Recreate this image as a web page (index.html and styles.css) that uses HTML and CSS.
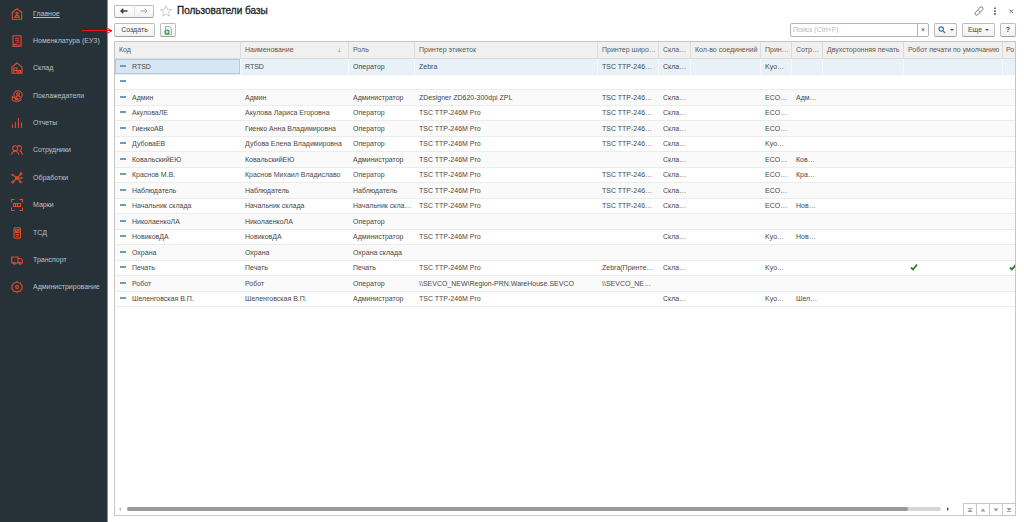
FILE: index.html
```html
<!DOCTYPE html>
<html lang="ru">
<head>
<meta charset="utf-8">
<title>Пользователи базы</title>
<link rel="stylesheet" href="styles.css">
</head>
<body>
<nav class="sidebar">
<a class="nav-item active" href="#"><svg class="nav-icon" viewBox="0 0 12 12"><path d="M.7 4.800 6 .8l5.300 4M1.300 4.500v6.700h9.400V4.500M3 9.300h6M4.200 9c0-2.200 3.600-2.200 3.600 0"/><circle cx="6" cy="5.300" r="1.100"/></svg><span>Главное</span></a>
<a class="nav-item" href="#"><svg class="nav-icon" viewBox="0 0 12 12"><path d="M2 .8h8v10.400H2zM4 3.200h4.200M4 5.200h4.200M5.500 7.200h2.700M1.500 9.300H6M4 9.300v2M6 9.300v2M8 9.300v2"/></svg><span>Номенклатура (ЕУЗ)</span></a>
<a class="nav-item" href="#"><svg class="nav-icon" viewBox="0 0 12 12"><path d="M1 11.200V5l5-4 5 4v6.200zM2.800 11V6H6v2.500h3.500V11M3 8.500h3V11M7.800 8.500V11"/></svg><span>Склад</span></a>
<a class="nav-item" href="#"><svg class="nav-icon" viewBox="0 0 12 12"><circle cx="7" cy="5" r="4.200"/><circle cx="7" cy="3.800" r="1.300"/><path d="M4.800 7.800c0-2.800 4.400-2.800 4.400 0M1.200 6v3.800l2 1.400h4.500l2.800-1.700M1.200 6.800l3 1.500h2.300v1.300H4"/></svg><span>Поклажедатели</span></a>
<a class="nav-item" href="#"><svg class="nav-icon" viewBox="0 0 12 12"><path d="M1.500 11V7.500M4.500 11V5M7.500 11V1M10.500 11V5.500"/></svg><span>Отчеты</span></a>
<a class="nav-item" href="#"><svg class="nav-icon" viewBox="0 0 12 12"><circle cx="4.200" cy="4.300" r="2.500"/><path d="M.7 10.800C.7 6 7.700 6 7.700 10.800M6.600 2.300c2-1.500 4.200 0 3.900 2.100-.2 1.300-1 2.100-2 2.300 1.900.5 2.800 2 2.800 4.100"/></svg><span>Сотрудники</span></a>
<a class="nav-item" href="#"><svg class="nav-icon" viewBox="0 0 12 12"><path d="M6 6 2 3M6 6l4-4M6 6l-4 4M6 6l3.500 3.500M6 6h4.500"/><circle cx="5.800" cy="6" r="1.300"/><circle cx="1.500" cy="2.800" r=".6"/><circle cx="10" cy="1.800" r=".9"/><circle cx="1.800" cy="10" r="1"/><circle cx="9.500" cy="10" r=".7"/><circle cx="10.700" cy="6" r=".5"/></svg><span>Обработки</span></a>
<a class="nav-item" href="#"><svg class="nav-icon" viewBox="0 0 12 12"><path d="M.5 3.500v-3h3M8.500.5h3v3M11.500 8.500v3h-3M3.500 11.500h-3v-3M2.500 4v4M4.500 4v4M6.500 4v4M9.500 4v4M2 4.500h8M2 7.500h8"/></svg><span>Марки</span></a>
<a class="nav-item" href="#"><svg class="nav-icon" viewBox="0 0 12 12"><rect x="3" y=".8" width="6.500" height="10.500" rx="1"/><path d="M4.500 2.800H8V5.500H4.500zM4.500 7.500H8M4.500 9.300H8M7.500 3 5 5.200"/></svg><span>ТСД</span></a>
<a class="nav-item" href="#"><svg class="nav-icon" viewBox="0 0 12 12"><path d="M2.200 9H.7V3H7v6H4.500M7 4.500h2.800l1.600 2V9h-1M7 9h1"/><circle cx="3.300" cy="9.200" r="1"/><circle cx="9.200" cy="9.200" r="1"/></svg><span>Транспорт</span></a>
<a class="nav-item" href="#"><svg class="nav-icon" viewBox="0 0 12 12"><path d="m6 .7 1.500 1 1.900.2.700 1.700 1.200 1.200-.4 1.200.4 1.300-1.200 1.200-.7 1.700-1.900.2-1.500.9-1.500-.9-1.900-.2-.7-1.700L.7 7.300 1.100 6 .7 4.800l1.200-1.200.7-1.700 1.900-.2z"/><circle cx="6" cy="6" r="1.400"/></svg><span>Администрирование</span></a>
</nav>
<main class="page">
<header class="titlebar">
<div class="history">
<button class="btn" aria-label="Назад"><svg class="arrow" viewBox="0 0 8 6"><path d="M7.500 3H1M3.300.8 1 3l2.300 2.200"/></svg></button>
<button class="btn" aria-label="Вперед" disabled><svg class="arrow" viewBox="0 0 8 6"><path d="M.5 3H7M4.700.8 7 3 4.700 5.200"/></svg></button>
</div>
<button class="plain" aria-label="В избранное"><svg class="star" viewBox="0 0 12 12"><path d="m6 .7 1.500 3.800 4 .2-3.100 2.500 1.100 4L6 9l-3.500 2.200 1.100-4L.5 4.700l4-.2z"/></svg></button>
<h1>Пользователи базы</h1>
<div class="window-tools">
<button class="plain" aria-label="Ссылка"><svg class="tool" viewBox="0 0 10 10"><path d="M4 3.500 6.200 1.200c1.500-1.200 3.500.6 2.500 2.300L6.500 5.800H5M6 6.500 3.800 8.800C2.300 10 .3 8.200 1.300 6.500L3.500 4.200H5"/></svg></button>
<button class="plain" aria-label="Меню"><svg class="tool dots" viewBox="0 0 10 10"><path d="M4.200 1.500h1.600v1.600H4.200zM4.200 4.300h1.600v1.600H4.200zM4.200 7.100h1.600v1.600H4.200z"/></svg></button>
<button class="plain" aria-label="Закрыть"><svg class="tool" viewBox="0 0 10 10"><path d="m3.500 3.500 3.500 3.500M7 3.500 3.500 7"/></svg></button>
</div>
</header>
<div class="toolbar">
<button class="btn create">Создать</button>
<button class="btn copy" aria-label="Создать копированием"><svg class="doc" viewBox="0 0 8 9"><path d="M1.500.5h4l2 2v6h-6z" fill="#eef1f3" stroke="#8996a0" stroke-width=".7"/><circle cx="3" cy="6" r="2.600" fill="#2ba143"/><path d="M3 4.500v3M1.500 6h3" stroke="#fff" stroke-width=".9"/></svg></button>
<div class="search"><input type="text" placeholder="Поиск (Ctrl+F)" aria-label="Поиск"><button aria-label="Очистить">×</button></div>
<button class="btn find" aria-label="Найти"><svg class="lens" viewBox="0 0 8 8"><circle cx="3.200" cy="3" r="2.200"/><path d="m5 4.800 2.300 2.300"/></svg><span class="caret"></span></button>
<button class="btn more">Еще<span class="caret"></span></button>
<button class="btn help">?</button>
</div>
<section class="list">
<div class="scroll">
<table>
<colgroup><col class="c-code"><col class="c-name"><col class="c-role"><col><col class="c-wide"><col class="c-store"><col class="c-conn"><col class="c-short"><col class="c-short"><col class="c-duplex"><col class="c-robot"><col class="c-last"></colgroup>
<thead><tr><th>Код</th><th><div class="sorted">Наименование<span>↓</span></div></th><th>Роль</th><th>Принтер этикеток</th><th>Принтер широ…</th><th>Скла…</th><th>Кол-во соединений</th><th>Прин…</th><th>Сотр…</th><th>Двухсторонняя печать</th><th>Робот печати по умолчанию</th><th>Ро</th></tr></thead>
<tbody>
<tr class="selected"><td>RTSD</td><td>RTSD</td><td>Оператор</td><td>Zebra</td><td>TSC TTP-246…</td><td>Скла…</td><td></td><td>Kyo…</td><td></td><td></td><td></td><td></td></tr>
<tr><td></td><td></td><td></td><td></td><td></td><td></td><td></td><td></td><td></td><td></td><td></td><td></td></tr>
<tr><td>Админ</td><td>Админ</td><td>Администратор</td><td>ZDesigner ZD620-300dpi ZPL</td><td>TSC TTP-246…</td><td>Скла…</td><td></td><td>ECO…</td><td>Адм…</td><td></td><td></td><td></td></tr>
<tr><td>АкуловаЛЕ</td><td>Акулова Лариса Егоровна</td><td>Оператор</td><td>TSC TTP-246M Pro</td><td>TSC TTP-246…</td><td>Скла…</td><td></td><td>ECO…</td><td></td><td></td><td></td><td></td></tr>
<tr><td>ГиенкоАВ</td><td>Гиенко Анна Владимировна</td><td>Оператор</td><td>TSC TTP-246M Pro</td><td>TSC TTP-246…</td><td>Скла…</td><td></td><td>ECO…</td><td></td><td></td><td></td><td></td></tr>
<tr><td>ДубоваЕВ</td><td>Дубова Елена Владимировна</td><td>Оператор</td><td>TSC TTP-246M Pro</td><td>TSC TTP-246…</td><td>Скла…</td><td></td><td>Kyo…</td><td></td><td></td><td></td><td></td></tr>
<tr><td>КовальскийЕЮ</td><td>КовальскийЕЮ</td><td>Администратор</td><td>TSC TTP-246M Pro</td><td></td><td>Скла…</td><td></td><td>ECO…</td><td>Ков…</td><td></td><td></td><td></td></tr>
<tr><td>Краснов М.В.</td><td>Краснов Михаил Владиславо</td><td>Оператор</td><td>TSC TTP-246M Pro</td><td>TSC TTP-246…</td><td>Скла…</td><td></td><td>ECO…</td><td>Кра…</td><td></td><td></td><td></td></tr>
<tr><td>Наблюдатель</td><td>Наблюдатель</td><td>Наблюдатель</td><td>TSC TTP-246M Pro</td><td>TSC TTP-246…</td><td>Скла…</td><td></td><td>ECO…</td><td></td><td></td><td></td><td></td></tr>
<tr><td>Начальник склада</td><td>Начальник склада</td><td>Начальник скла…</td><td>TSC TTP-246M Pro</td><td>TSC TTP-246…</td><td>Скла…</td><td></td><td>ECO…</td><td>Нов…</td><td></td><td></td><td></td></tr>
<tr><td>НиколаенкоЛА</td><td>НиколаенкоЛА</td><td>Оператор</td><td></td><td></td><td></td><td></td><td></td><td></td><td></td><td></td><td></td></tr>
<tr><td>НовиковДА</td><td>НовиковДА</td><td>Администратор</td><td>TSC TTP-246M Pro</td><td></td><td>Скла…</td><td></td><td>Kyo…</td><td>Нов…</td><td></td><td></td><td></td></tr>
<tr><td>Охрана</td><td>Охрана</td><td>Охрана склада</td><td></td><td></td><td></td><td></td><td></td><td></td><td></td><td></td><td></td></tr>
<tr><td>Печать</td><td>Печать</td><td>Печать</td><td>TSC TTP-246M Pro</td><td>Zebra(Принте…</td><td>Скла…</td><td></td><td>Kyo…</td><td></td><td></td><td class="check"><svg class="tick" viewBox="0 0 8 8"><path d="m1 4.500 2 2L7 1.500"/></svg></td><td class="check"><svg class="tick" viewBox="0 0 8 8"><path d="m1 4.500 2 2L7 1.500"/></svg></td></tr>
<tr><td>Робот</td><td>Робот</td><td>Оператор</td><td>\\SEVCO_NEW\Region-PRN.WareHouse.SEVCO</td><td>\\SEVCO_NE…</td><td></td><td></td><td></td><td></td><td></td><td></td><td></td></tr>
<tr><td>Шеленговская В.П.</td><td>Шеленговская В.П.</td><td>Администратор</td><td>TSC TTP-246M Pro</td><td></td><td>Скла…</td><td></td><td>Kyo…</td><td>Шел…</td><td></td><td></td><td></td></tr>
</tbody>
</table>
</div>
<footer class="list-foot">
<span class="edge left"></span>
<div class="track"><div class="thumb"></div></div>
<span class="edge right"></span>
<div class="pager">
<button aria-label="В начало"><svg viewBox="0 0 6 6"><path d="M.5 1h5v.8h-5zM3 2l2.500 3h-5z"/></svg></button>
<button aria-label="Вверх"><svg viewBox="0 0 6 6"><path d="m3 1.500 2.500 3h-5z"/></svg></button>
<button aria-label="Вниз"><svg viewBox="0 0 6 6"><path d="M3 4.500.5 1.500h5z"/></svg></button>
<button aria-label="В конец"><svg viewBox="0 0 6 6"><path d="M.5 4.200h5V5h-5zM3 4 .5 1h5z"/></svg></button>
</div>
</footer>
</section>
</main>
<svg class="pointer" viewBox="0 0 32 8"><path d="M0 3.500h29M24 .8l6 3-6 3.200"/></svg>
</body>
</html>
```
FILE: styles.css
```css
* { box-sizing: border-box; }
body {
  margin: 0;
  height: 100vh;
  display: flex;
  background: #fff;
  color: #484848;
  font: 7px/10px "Liberation Sans", Arial, sans-serif;
}
button, input { font: inherit; color: inherit; margin: 0; padding: 0; }
svg { display: block; fill: none; }

.sidebar {
  flex: none;
  width: 108px;
  display: grid;
  grid-template-rows: repeat(11, 1fr) 221px;
  background: #263238;
  border-right: 1px solid #8c9396;
}
.nav-item {
  display: flex;
  align-items: center;
  gap: 10px;
  padding-left: 11px;
  color: #bcc2c4;
  text-decoration: none;
  white-space: nowrap;
}
.nav-item.active { text-decoration: underline; }
.nav-icon { width: 12px; height: 12px; stroke: #e04b30; stroke-width: 1.1; }

.page {
  flex: 1;
  min-width: 0;
  display: flex;
  flex-direction: column;
  padding: 4px 8px 6px 6px;
}
.titlebar { display: flex; align-items: center; height: 14px; }
.btn {
  display: flex;
  align-items: center;
  justify-content: center;
  height: 14px;
  border: 1px solid #bcbcbc;
  border-bottom-color: #a0a0a0;
  border-radius: 2px;
  background: linear-gradient(#fff, #f1f1f1);
}
.history { display: flex; width: 40px; }
.history .btn { flex: 1; height: 13px; }
.history .btn:first-child { border-radius: 2px 0 0 2px; border-right-color: #ddd; }
.history .btn:last-child { border-radius: 0 2px 2px 0; border-left: 0; }
.arrow { width: 8px; height: 6px; stroke: #3c3c3c; stroke-width: 1.4; }
.btn:disabled .arrow { stroke: #a5a5a5; stroke-width: 1; }
.plain { border: 0; background: none; }
.star { width: 12px; height: 12px; margin: 0 5px 0 6px; stroke: #b4bac0; stroke-width: .7; }
h1 { margin: 0; font-size: 10px; line-height: 14px; font-weight: 400; color: #222; -webkit-text-stroke: .3px #222; }
.window-tools { display: flex; gap: 6px; margin-left: auto; }
.tool { width: 10px; height: 10px; stroke: #555; stroke-width: .8; }
.tool.dots { fill: #555; stroke: none; }

.toolbar { display: flex; gap: 5px; margin-top: 5px; }
.create { width: 41px; }
.copy { width: 16px; }
.doc { width: 8px; height: 9px; }
.search {
  display: flex;
  width: 139px;
  height: 14px;
  margin-left: auto;
  border: 1px solid #b4b4b4;
  border-radius: 2px;
}
.search input { flex: 1; min-width: 0; border: 0; padding-left: 2px; outline: 0; background: none; }
.search input::placeholder { color: #b8b8b8; }
.search button { width: 11px; border: 0; border-left: 1px solid #b4b4b4; background: none; }
.find { width: 23px; gap: 4px; }
.lens { width: 8px; height: 8px; stroke: #2a78b5; stroke-width: 1.2; }
.caret { border: 2px solid transparent; border-top-color: #555; border-bottom: 0; }
.more { width: 33px; gap: 3px; }
.help { width: 16px; font-weight: 700; }

.list {
  flex: 1;
  min-height: 0;
  display: flex;
  flex-direction: column;
  margin-top: 4px;
  border: 1px solid #c6c6c6;
}
.scroll { flex: 1; min-height: 0; overflow: hidden; }
table { table-layout: fixed; width: calc(100% + 8px); border-collapse: separate; border-spacing: 0; }
.c-code { width: 126px; }
.c-name { width: 108px; }
.c-role { width: 66px; }
.c-wide { width: 61px; }
.c-store { width: 32px; }
.c-conn { width: 70px; }
.c-short { width: 31px; }
.c-duplex { width: 81px; }
.c-robot { width: 99px; }
.c-last { width: 20px; }
th, td { padding: 0 0 0 4px; text-align: left; font-weight: 400; white-space: nowrap; overflow: hidden; }
th { height: 17px; background: #f0f0f0; border-right: 1px solid #dcdcdc; border-bottom: 1px solid #dcdcdc; color: #5a5a5a; }
th:last-child { padding-left: 3px; }
.sorted { display: flex; justify-content: space-between; padding-right: 7px; }
td { height: 16px; border-bottom: 1px solid #ececec; line-height: 10px; }
tr:nth-child(even) td { height: 15px; }
tbody tr:nth-child(odd) td { background: #fafafa; }
td:first-child::before {
  content: "";
  display: inline-block;
  width: 6px;
  height: 2px;
  margin: 0 6px 2px 1px;
  background: #7099ba;
}
tbody tr.selected:first-child td { background: #e9f1f8; border-right: 1px solid #f6f9fc; }
tbody tr.selected:first-child td:first-child { background: #d8e6f2; box-shadow: inset 0 0 0 1px #abcde4; }
tbody tr:nth-child(even) td { background: #fff; }
td.check { padding-left: 6px; }
.tick { width: 8px; height: 8px; margin-bottom: 3px; stroke: #2f7a2f; stroke-width: 1.8; }

.list-foot { display: flex; align-items: center; height: 12px; }
.edge { border: 2px solid transparent; }
.edge.left { border-right-color: #bbb; margin: 0 6px 0 4px; border-left: 0; }
.edge.right { border-left-color: #555; margin: 0 14px 0 6px; border-right: 0; }
.track { flex: 1; height: 4px; border-radius: 2px; background: #d6d6d6; }
.thumb { width: 96%; height: 4px; border-radius: 2px; background: #999; }
.pager { display: flex; align-self: stretch; border-top: 1px solid #c6c6c6; }
.pager button { width: 13px; border: 0; border-left: 1px solid #c6c6c6; background: none; }
.pager svg { width: 6px; height: 6px; margin: auto; fill: #999; }

.pointer { position: absolute; left: 82px; top: 27px; width: 32px; height: 8px; stroke: #f01018; stroke-width: 1; }
```
